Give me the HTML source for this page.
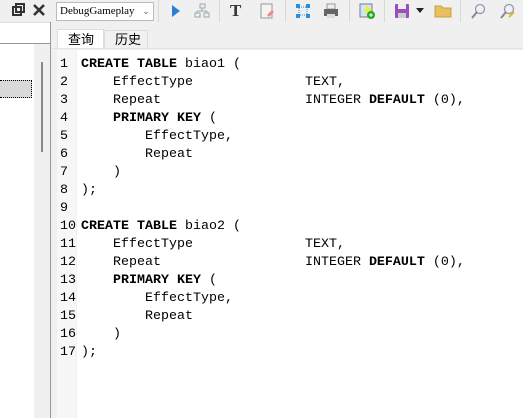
<!DOCTYPE html>
<html><head><meta charset="utf-8"><style>
*{margin:0;padding:0;box-sizing:border-box}
body{width:523px;height:418px;overflow:hidden;background:#f0f0f0;font-family:"Liberation Sans","Noto Sans CJK SC",sans-serif;position:relative}
.a{position:absolute}
.code{position:absolute;left:57px;top:50px;right:0;bottom:0;background:#fff}
.gut{position:absolute;left:0;top:0;width:20px;bottom:0;background:#f7f7f7;border-right:1px solid #f0f0f0}
pre{font-family:"Liberation Mono","DejaVu Sans Mono",monospace;font-size:13.33px;line-height:18px;color:#000;position:absolute;top:6px}
b{font-weight:bold}
.sep{position:absolute;top:0;width:1px;height:22px;background:#d8d8d8}
</style></head><body>
<div class="a" style="left:0;top:0;width:50px;height:22px;background:#f0f0f0"></div>
<svg class="a" style="left:11px;top:2px" width="40" height="16" viewBox="0 0 40 16">
<rect x="2" y="5" width="8" height="8" fill="none" stroke="#333" stroke-width="2"/>
<rect x="5" y="2" width="8" height="8" fill="none" stroke="#333" stroke-width="2"/>
<path d="M23 3 L33 13 M33 3 L23 13" stroke="#333" stroke-width="2.6"/>
</svg>
<div class="a" style="left:0;top:22px;width:50px;height:21px;background:#fff;border-top:1px solid #ddd"></div>
<div class="a" style="left:0;top:43px;width:50px;height:375px;background:#fff;border-top:1px solid #999"></div>
<div class="a" style="left:34px;top:44px;width:16px;height:374px;background:#f0f0f0"></div>
<div class="a" style="left:41px;top:62px;width:2px;height:90px;background:#888"></div>
<div class="a" style="left:0;top:80px;width:32px;height:18px;background:#d9d9d9;border:1px dotted #000;border-left:none"></div>
<div class="a" style="left:50px;top:22px;width:1px;height:396px;background:#999"></div>
<div class="a" style="left:56px;top:2px;width:98px;height:19px;background:#fff;border:1px solid #bbb;font-family:'Liberation Serif',serif;font-size:11px;line-height:17px;padding-left:3px;overflow:hidden;white-space:nowrap">DebugGameplay<span class="a" style="right:0;top:0;width:14px;height:17px;background:#fff;color:#666;font-size:9px;text-align:center">&#8964;</span></div>
<div class="sep" style="left:158px"></div>
<svg class="a" style="left:168px;top:3px" width="16" height="16"><path d="M4 2 L12 8 L4 14Z" fill="#2a7fd4"/></svg>
<svg class="a" style="left:194px;top:3px" width="16" height="16"><g fill="none" stroke="#9aa" stroke-width="1"><rect x="6" y="1" width="5" height="4"/><rect x="1" y="10" width="5" height="4"/><rect x="10" y="10" width="5" height="4"/><path d="M8 5v3M3 8h10M3 8v2M13 8v2"/></g></svg>
<div class="sep" style="left:219px"></div>
<div class="a" style="left:230px;top:1px;font-family:'Liberation Serif',serif;font-weight:bold;font-size:17px;color:#333">T</div>
<svg class="a" style="left:259px;top:3px" width="16" height="16"><rect x="2" y="1" width="11" height="14" fill="#f4f4f4" stroke="#999"/><path d="M8 12 L13 7 L15 9 L10 14Z" fill="#e88"/></svg>
<div class="sep" style="left:285px"></div>
<svg class="a" style="left:295px;top:3px" width="16" height="16"><g fill="#2a8ed8"><rect x="1" y="1" width="4" height="4"/><rect x="11" y="1" width="4" height="4"/><rect x="1" y="11" width="4" height="4"/><rect x="11" y="11" width="4" height="4"/></g><rect x="4" y="4" width="8" height="8" fill="none" stroke="#2a8ed8" stroke-dasharray="1 1"/></svg>
<svg class="a" style="left:323px;top:3px" width="16" height="16"><rect x="4" y="1" width="8" height="5" fill="#eee" stroke="#999"/><rect x="1" y="6" width="14" height="7" fill="#666"/><rect x="4" y="11" width="8" height="4" fill="#ddd"/></svg>
<div class="sep" style="left:349px"></div>
<svg class="a" style="left:359px;top:3px" width="16" height="16"><rect x="1" y="1" width="12" height="13" fill="#cfe4f5" stroke="#779"/><path d="M9 1 L5 9 H9 L7 14 L13 5 H9Z" fill="#ee3"/><circle cx="12" cy="12" r="4" fill="#2a2"/><path d="M10 12h4M12 10v4" stroke="#fff"/></svg>
<div class="sep" style="left:384px"></div>
<svg class="a" style="left:394px;top:3px" width="16" height="16"><rect x="1" y="1" width="14" height="14" rx="1" fill="#9a4fc0"/><rect x="4" y="1" width="8" height="5" fill="#eee"/><rect x="4" y="10" width="8" height="5" fill="#ccc"/></svg>
<svg class="a" style="left:416px;top:8px" width="8" height="5"><path d="M0 0h8L4 5Z" fill="#222"/></svg>
<svg class="a" style="left:434px;top:3px" width="18" height="16"><path d="M1 3h6l2 2h8v9H1Z" fill="#e8c060" stroke="#c9a040"/></svg>
<div class="sep" style="left:460px"></div>
<svg class="a" style="left:470px;top:3px" width="16" height="16"><circle cx="10" cy="6" r="4.5" fill="#eef" stroke="#999" stroke-width="1.3"/><path d="M7 9 L2 15" stroke="#888" stroke-width="2"/></svg>
<svg class="a" style="left:499px;top:3px" width="16" height="16"><circle cx="10" cy="6" r="4.5" fill="#eef" stroke="#999" stroke-width="1.3"/><path d="M7 9 L2 15" stroke="#888" stroke-width="2"/><path d="M10 14 L15 9" stroke="#db3" stroke-width="2"/></svg>
<div class="a" style="left:57px;top:29px;width:47px;height:20px;background:#fff;border:1px solid #ddd;border-bottom:none;font-size:13px;line-height:19px;padding-left:10px">查询</div>
<div class="a" style="left:104px;top:30px;width:44px;height:19px;background:#f0f0f0;border:1px solid #ddd;border-bottom:none;font-size:13px;line-height:18px;padding-left:10px">历史</div>
<div class="a" style="left:51px;top:48px;width:472px;height:1px;background:#e4e4e4"></div>
<div class="code">
<div class="gut"></div>
<pre style="left:3px">1
2
3
4
5
6
7
8
9
10
11
12
13
14
15
16
17</pre>
<pre style="left:24px"><b>CREATE TABLE</b> biao1 (
    EffectType              TEXT,
    Repeat                  INTEGER <b>DEFAULT</b> (0),
    <b>PRIMARY KEY</b> (
        EffectType,
        Repeat
    )
);

<b>CREATE TABLE</b> biao2 (
    EffectType              TEXT,
    Repeat                  INTEGER <b>DEFAULT</b> (0),
    <b>PRIMARY KEY</b> (
        EffectType,
        Repeat
    )
);</pre>
</div>
</body></html>
